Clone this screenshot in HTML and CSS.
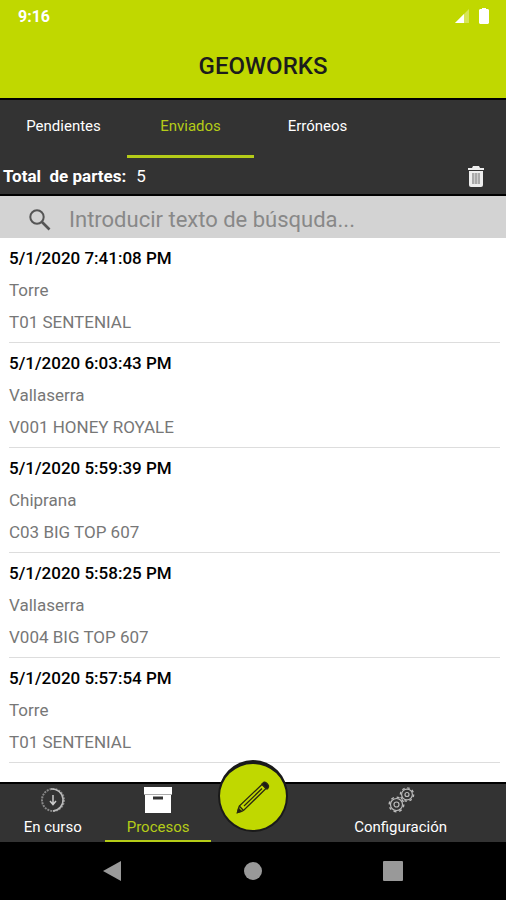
FILE: index.html
```html
<!DOCTYPE html>
<html lang="es">
  <head>
    <meta charset="utf-8">
    <meta name="viewport" content="width=device-width, initial-scale=1">
    <title>Geoworks</title>
    <link rel="stylesheet" href="styles.css">
  </head>
  <body>
    <header class="app-header">
      <div class="status-bar">
        <span>9:16</span>
        <div class="status-icons">
          <svg width="16" height="16" viewBox="0 0 16 16">
            <path d="M1 15L15 1v14z" fill="#fff" opacity=".35"/>
            <path d="M1 15L10 6v9z" fill="#fff"/>
          </svg>
          <svg width="12" height="18" viewBox="0 0 12 18">
            <path d="M4 1h4v1h2l1 1v13l-1 1H2l-1-1V3l1-1h2z" fill="#fff"/>
          </svg>
        </div>
      </div>
      <h1>GEOWORKS</h1>
    </header>

    <nav class="tabs">
      <a href="#pendientes">Pendientes</a>
      <a href="#enviados" class="active">Enviados</a>
      <a href="#erroneos">Erróneos</a>
    </nav>

    <div class="summary">
      <strong>Total&nbsp; de partes:</strong>
      <span class="total">5</span>
      <button type="button" class="delete" aria-label="Borrar">
        <svg width="18" height="22" viewBox="0 0 18 22">
          <path d="M6 1h6l1 2h4v2H1V3h4z" fill="#eee"/>
          <path d="M2 6h14v14q0 2-2 2H4q-2 0-2-2z" fill="#eee"/>
          <path d="M5 8h8v11H5z" fill="#aaa"/>
          <path d="M7.500 8v11M10.500 8v11" stroke="#ccc"/>
        </svg>
      </button>
    </div>

    <form class="search">
      <label for="search-text" aria-label="Buscar">
        <svg width="24" height="24" viewBox="0 0 24 24" fill="none" stroke="#555">
          <circle cx="9" cy="9" r="6.700" stroke-width="2"/>
          <path d="M14 14l7.500 7.500" stroke-width="2.600"/>
        </svg>
      </label>
      <input type="text" id="search-text" placeholder="Introducir texto de búsquda...">
    </form>

    <main>
      <ul class="part-list">
        <li>
          <h2>5/1/2020 7:41:08 PM</h2>
          <p>Torre</p>
          <p>T01 SENTENIAL</p>
        </li>
        <li>
          <h2>5/1/2020 6:03:43 PM</h2>
          <p>Vallaserra</p>
          <p>V001 HONEY ROYALE</p>
        </li>
        <li>
          <h2>5/1/2020 5:59:39 PM</h2>
          <p>Chiprana</p>
          <p>C03 BIG TOP 607</p>
        </li>
        <li>
          <h2>5/1/2020 5:58:25 PM</h2>
          <p>Vallaserra</p>
          <p>V004 BIG TOP 607</p>
        </li>
        <li>
          <h2>5/1/2020 5:57:54 PM</h2>
          <p>Torre</p>
          <p>T01 SENTENIAL</p>
        </li>
      </ul>
    </main>

    <nav class="bottom-nav">
      <a href="#en-curso">
        <svg width="28" height="28" viewBox="0 0 28 28" fill="none">
          <circle cx="14" cy="14" r="11" stroke="#888" stroke-width="2" stroke-dasharray="2 1"/>
          <path d="M12 3a11 11 0 0 1 2 22" stroke="#bbb" stroke-width="1.500"/>
          <path d="M14 9v9M11 15l3 3.500 3-3.500" stroke="#ccc" stroke-width="1.500"/>
        </svg>
        <span>En curso</span>
      </a>
      <a href="#procesos" class="active">
        <svg width="28" height="28" viewBox="0 0 28 28">
          <path d="M0 1h28v7H0z" fill="#fff"/>
          <path d="M1 9h26v18H1z" fill="#fff"/>
          <path d="M0 8.500h28" stroke="#aaa"/>
          <path d="M9 10.500h10v3H9z" fill="#333"/>
        </svg>
        <span>Procesos</span>
      </a>
      <div class="new-part">
        <button type="button" aria-label="Nuevo parte">
          <svg width="36" height="36" viewBox="0 0 36 36" fill="none" stroke="#2a2a10" stroke-width="1.300">
            <path d="M2.500 33.500l1.800-6.500L27 5.500l4 4L8.500 31.500z"/>
            <path d="M4.300 27l4.200 4.500M9 27L27 9.500"/>
            <path d="M2.500 33.500l1-4 3 3z" fill="#1a1a1a"/>
            <path d="M28 4q1.500-2 4 .5t1 4.500l-1 1-5-5z" fill="#1a1a1a"/>
          </svg>
        </button>
      </div>
      <a href="#configuracion">
        <svg width="28" height="28" viewBox="0 0 28 28" fill="none" stroke="#bbb">
          <circle cx="9.500" cy="18.500" r="7.300" stroke-width="1.400" stroke-dasharray="2.900 2.830"/>
          <circle cx="9.500" cy="18.500" r="6" stroke-width="1.200"/>
          <circle cx="9.500" cy="18.500" r="2.500" stroke-width="1.200"/>
          <circle cx="20" cy="8.500" r="6.600" stroke-width="1.400" stroke-dasharray="2.600 2.580"/>
          <circle cx="20" cy="8.500" r="5.400" stroke-width="1.200"/>
          <circle cx="20" cy="8.500" r="2" stroke-width="1.200"/>
        </svg>
        <span>Configuración</span>
      </a>
    </nav>

    <div class="system-bar">
      <button type="button" aria-label="Atrás">
        <svg width="20" height="22" viewBox="0 0 20 22"><path d="M0 11L18 1v20z" fill="#999"/></svg>
      </button>
      <button type="button" aria-label="Inicio">
        <svg width="20" height="20" viewBox="0 0 20 20"><circle cx="10" cy="10" r="9" fill="#999"/></svg>
      </button>
      <button type="button" aria-label="Recientes">
        <svg width="20" height="20" viewBox="0 0 20 20"><rect width="20" height="20" rx="1" fill="#999"/></svg>
      </button>
    </div>
  </body>
</html>
```
FILE: styles.css
```css
* {
  box-sizing: border-box;
}

body {
  display: flex;
  flex-direction: column;
  min-height: 100vh;
  margin: 0;
  background-color: #fff;
  color: #fff;
  font-family: Roboto, "Liberation Sans", sans-serif;
  font-size: 16px;
}

h1, h2, p, ul {
  margin: 0;
  padding: 0;
}

a {
  color: inherit;
  text-decoration: none;
}

button {
  padding: 0;
  border: none;
  background: none;
  cursor: pointer;
}

svg {
  display: block;
}

.app-header {
  background-color: #c0d800;
  border-bottom: 2px solid #000;
}

.status-bar {
  display: flex;
  align-items: center;
  justify-content: space-between;
  height: 32px;
  padding: 0 16px 0 18px;
  font-weight: 700;
}

.status-icons {
  display: flex;
  align-items: center;
  gap: 8px;
}

.app-header h1 {
  padding: 2px 0 0 20px;
  color: #1c1c1c;
  font-size: 24px;
  font-weight: 500;
  line-height: 64px;
  text-align: center;
}

.tabs {
  display: flex;
  background-color: #333;
}

.tabs a {
  min-width: 127px;
  padding: 1px 0 4px;
  border-bottom: 3px solid transparent;
  font-size: 15px;
  line-height: 50px;
  text-align: center;
}

.tabs .active,
.bottom-nav .active {
  border-color: #b5cc18;
  color: #b5cc18;
}

.summary {
  display: flex;
  align-items: center;
  height: 38px;
  padding: 0 21px 0 3px;
  border-bottom: 2px solid #000;
  background-color: #333;
  font-size: 17px;
}

.summary .total {
  margin-left: 10px;
}

.delete {
  margin-left: auto;
}

.search {
  display: flex;
  align-items: center;
  height: 42px;
  padding: 6px 28px 0;
  background-color: #d3d3d3;
}

.search input {
  flex: 1;
  min-width: 0;
  margin-left: 17px;
  padding: 0;
  border: none;
  background: none;
  color: #333;
  font: inherit;
  font-size: 22px;
  line-height: 32px;
}

.search input::placeholder {
  color: #888;
}

main {
  flex: 1;
}

.part-list {
  padding: 0 6px 0 9px;
  list-style: none;
}

.part-list li {
  padding: 4px 0;
  border-bottom: 1px solid #ddd;
  color: #777;
  font-size: 17px;
  line-height: 32px;
}

.part-list h2 {
  color: #000;
  font-size: 17px;
  font-weight: 500;
}

.bottom-nav {
  display: grid;
  grid-template-columns: 5fr 5fr 4fr 10fr;
  height: 60px;
  border-top: 2px solid #000;
  background-color: #333;
  font-size: 15px;
}

.bottom-nav a {
  display: flex;
  flex-direction: column;
  align-items: center;
  padding-top: 2px;
  border-bottom: 3px solid transparent;
  line-height: 26px;
}

.new-part {
  display: flex;
  justify-content: center;
}

/* the round button sticks out above the bar */
.new-part button {
  display: flex;
  flex-shrink: 0;
  align-items: center;
  justify-content: center;
  width: 70px;
  height: 72px;
  margin-top: -24px;
  border: 2px solid #1a1a1a;
  border-top-width: 4px;
  border-radius: 50%;
  background-color: #c0d800;
}

.system-bar {
  display: flex;
  align-items: center;
  justify-content: center;
  gap: 120px;
  height: 58px;
  background-color: #000;
}
```
